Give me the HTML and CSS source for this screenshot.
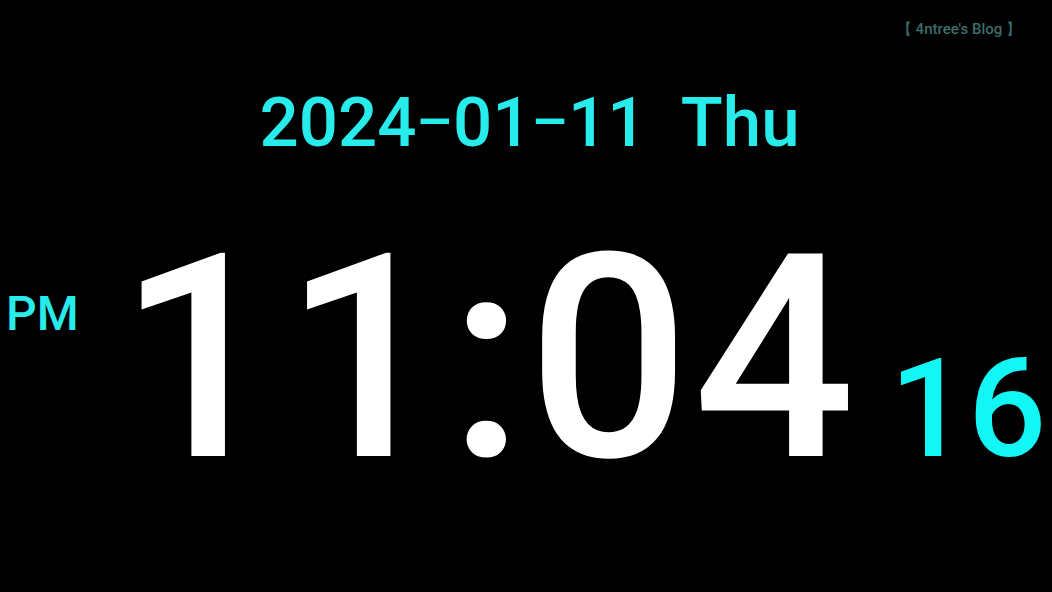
FILE: index.html
```html
<!DOCTYPE html>
<html>
<head>
<meta charset="utf-8">
<link rel="stylesheet" href="styles.css">
</head>
<body>
<div class="screen">
  <div class="top">
    <span class="blog">【 4ntree's Blog 】</span>
  </div>
  <div class="date">2024<span class="dash">–</span>01<span class="dash">–</span>11&nbsp;&nbsp;Thu</div>
  <div class="clock">
    <div class="ampm">PM</div>
    <div class="time">11:04</div>
    <div class="sec">16</div>
  </div>
</div>
</body>
</html>
```
FILE: styles.css
```css
html, body {
  margin: 0;
  padding: 0;
  background: #000;
}
.screen {
  width: 1052px;
  height: 592px;
  background: #000;
  font-family: Roboto, "Liberation Sans", sans-serif;
  font-weight: 500;
  overflow: hidden;
}
.top {
  display: flex;
  justify-content: flex-end;
  padding: 18px 31px 0 0;
  height: 22px;
}
.blog {
  font-size: 15px;
  line-height: 22px;
  color: #3d6d6a;
}
.date {
  text-align: center;
  font-size: 69px;
  line-height: 1;
  color: #28ecec;
  margin-top: 48px;
  padding-left: 7px;
}
.dash {
  font-size: 57px;
  vertical-align: 4px;
}
.clock {
  display: flex;
  align-items: baseline;
  margin-top: 60px;
  padding-left: 6px;
}
.ampm {
  align-self: flex-start;
  font-size: 48px;
  line-height: 1;
  color: #28ecec;
  margin-top: 73px;
  width: 112px;
}
.time {
  font-size: 285px;
  line-height: 1;
  color: #fff;
  letter-spacing: 3.5px;
}
.sec {
  font-size: 138px;
  line-height: 1;
  color: #12f6f6;
  margin-left: 31px;
}
```
